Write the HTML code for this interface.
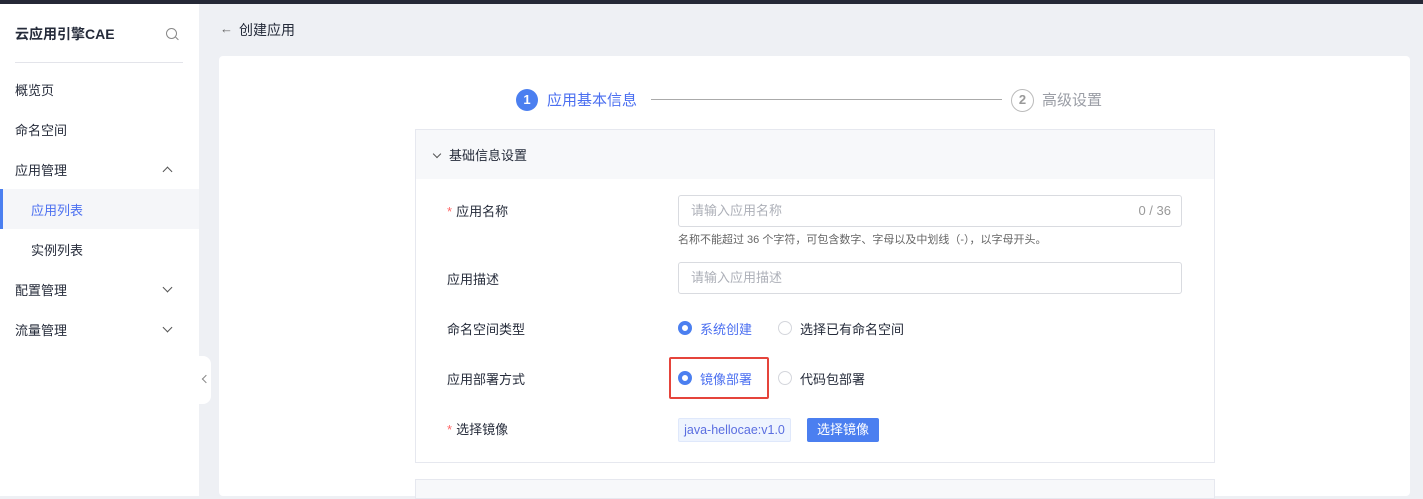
<!DOCTYPE html>
<html><head><meta charset="utf-8"><style>
*{margin:0;padding:0;box-sizing:border-box}
body{width:1423px;height:496px;overflow:hidden;background:#eef0f4;font-family:"Liberation Sans","Noto Sans CJK SC",sans-serif;font-size:13px;color:#252b3a;position:relative}
.a{position:absolute}
.top{left:0;top:0;width:1423px;height:4px;background:#252836}
.side{left:0;top:4px;width:199px;height:492px;background:#fff}
.mi{position:absolute;left:15px;font-size:13px;color:#252b3a}
.chev{position:absolute;left:164px;width:7px;height:7px;border-left:1px solid #555;border-bottom:1px solid #555}
.card{left:219px;top:56px;width:1191px;height:440px;background:#fff;border-radius:4px}
.lbl{position:absolute;left:447px;font-size:13px;color:#252b3a}
.star{color:#f66;margin-right:4px}
.inp{position:absolute;left:678px;width:504px;height:32px;border:1px solid #d9dbe0;border-radius:3px;font-size:13px;color:#adb0b8;padding-left:12px;line-height:30px}
.radio{position:absolute;width:14px;height:14px;border-radius:50%}
.on{background:#fff;border:4px solid #4b7ff0}
.off{border:1px solid #d4d6dc;background:#fff}
</style></head><body>
<div class="a top"></div>
<div class="a side">
<div class="a" style="left:15px;top:20px;font-size:14px;font-weight:bold;color:#252b3a">云应用引擎CAE</div>
<div class="a" style="left:166px;top:24px;width:11px;height:11px;border:1px solid #888;border-radius:50%"></div>
<div class="a" style="left:175px;top:34px;width:4px;height:1px;background:#888;transform:rotate(45deg)"></div>
<div class="a" style="left:15px;top:58px;width:168px;height:1px;background:#e3e4ea"></div>
<div class="mi" style="top:76px">概览页</div>
<div class="mi" style="top:116px">命名空间</div>
<div class="mi" style="top:156px">应用管理</div>
<div class="chev" style="top:164px;transform:rotate(135deg)"></div>
<div class="a" style="left:0;top:185px;width:199px;height:40px;background:#f5f6f9"></div>
<div class="a" style="left:0;top:185px;width:3px;height:40px;background:#4b7ff0"></div>
<div class="mi" style="left:31px;top:196px;color:#4b6ff0">应用列表</div>
<div class="mi" style="left:31px;top:236px">实例列表</div>
<div class="mi" style="top:276px">配置管理</div>
<div class="chev" style="top:280px;transform:rotate(-45deg)"></div>
<div class="mi" style="top:316px">流量管理</div>
<div class="chev" style="top:320px;transform:rotate(-45deg)"></div>
</div>
<div class="a" style="left:198px;top:356px;width:13px;height:48px;background:#fff;border-radius:0 8px 8px 0"></div>
<div class="a" style="left:203px;top:376px;width:6px;height:6px;border-left:1px solid #888;border-bottom:1px solid #888;transform:rotate(45deg)"></div>
<div class="a" style="left:220px;top:21px;color:#666;font-size:13px">←</div>
<div class="a" style="left:239px;top:20px;font-size:14px;color:#252b3a">创建应用</div>
<div class="a card"></div>
<div class="a" style="left:516px;top:89px;width:22px;height:22px;border-radius:50%;background:#4b7ff0;color:#fff;font-weight:bold;font-size:13px;text-align:center;line-height:22px">1</div>
<div class="a" style="left:547px;top:89px;font-size:15px;color:#4b6ff0">应用基本信息</div>
<div class="a" style="left:651px;top:99px;width:351px;height:1px;background:#aaa"></div>
<div class="a" style="left:1011px;top:89px;width:23px;height:23px;border-radius:50%;border:1.5px solid #bbb;color:#999;font-weight:bold;font-size:13px;text-align:center;line-height:20px">2</div>
<div class="a" style="left:1042px;top:89px;font-size:15px;color:#9a9da5">高级设置</div>
<div class="a" style="left:415px;top:129px;width:800px;height:334px;border:1px solid #e6e8ef"></div>
<div class="a" style="left:416px;top:130px;width:798px;height:49px;background:#f7f8fa"></div>
<div class="a" style="left:434px;top:151px;width:6px;height:6px;border-left:1px solid #555;border-bottom:1px solid #555;transform:rotate(-45deg)"></div>
<div class="a" style="left:449px;top:145px;font-size:13px">基础信息设置</div>
<div class="lbl" style="top:201px"><span class="star">*</span>应用名称</div>
<div class="inp" style="top:195px">请输入应用名称<span style="position:absolute;right:10px;color:#999">0 / 36</span></div>
<div class="a" style="left:678px;top:231px;font-size:11px;color:#666">名称不能超过 36 个字符，可包含数字、字母以及中划线（-），以字母开头。</div>
<div class="lbl" style="top:269px">应用描述</div>
<div class="inp" style="top:262px">请输入应用描述</div>
<div class="lbl" style="top:319px">命名空间类型</div>
<div class="radio on" style="left:678px;top:321px"></div>
<div class="a" style="left:700px;top:319px;color:#4b6ff0">系统创建</div>
<div class="radio off" style="left:778px;top:321px"></div>
<div class="a" style="left:800px;top:319px">选择已有命名空间</div>
<div class="lbl" style="top:369px">应用部署方式</div>
<div class="a" style="left:669px;top:357px;width:100px;height:42px;border:2px solid #e5443b;border-radius:2px"></div>
<div class="radio on" style="left:678px;top:371px"></div>
<div class="a" style="left:700px;top:369px;color:#4b6ff0">镜像部署</div>
<div class="radio off" style="left:778px;top:371px"></div>
<div class="a" style="left:800px;top:369px">代码包部署</div>
<div class="lbl" style="top:419px"><span class="star">*</span>选择镜像</div>
<div class="a" style="left:678px;top:418px;width:113px;height:24px;background:#eef4fe;border:1px solid #dfe8fb;border-radius:2px;color:#5a6ee0;font-size:12.5px;text-align:center;line-height:22px">java-hellocae:v1.0</div>
<div class="a" style="left:807px;top:418px;width:72px;height:24px;background:#4b7ff0;border-radius:2px;color:#fff;text-align:center;line-height:24px">选择镜像</div>
<div class="a" style="left:415px;top:479px;width:800px;height:20px;border:1px solid #e6e8ef;background:#f7f8fa"></div>
</body></html>
